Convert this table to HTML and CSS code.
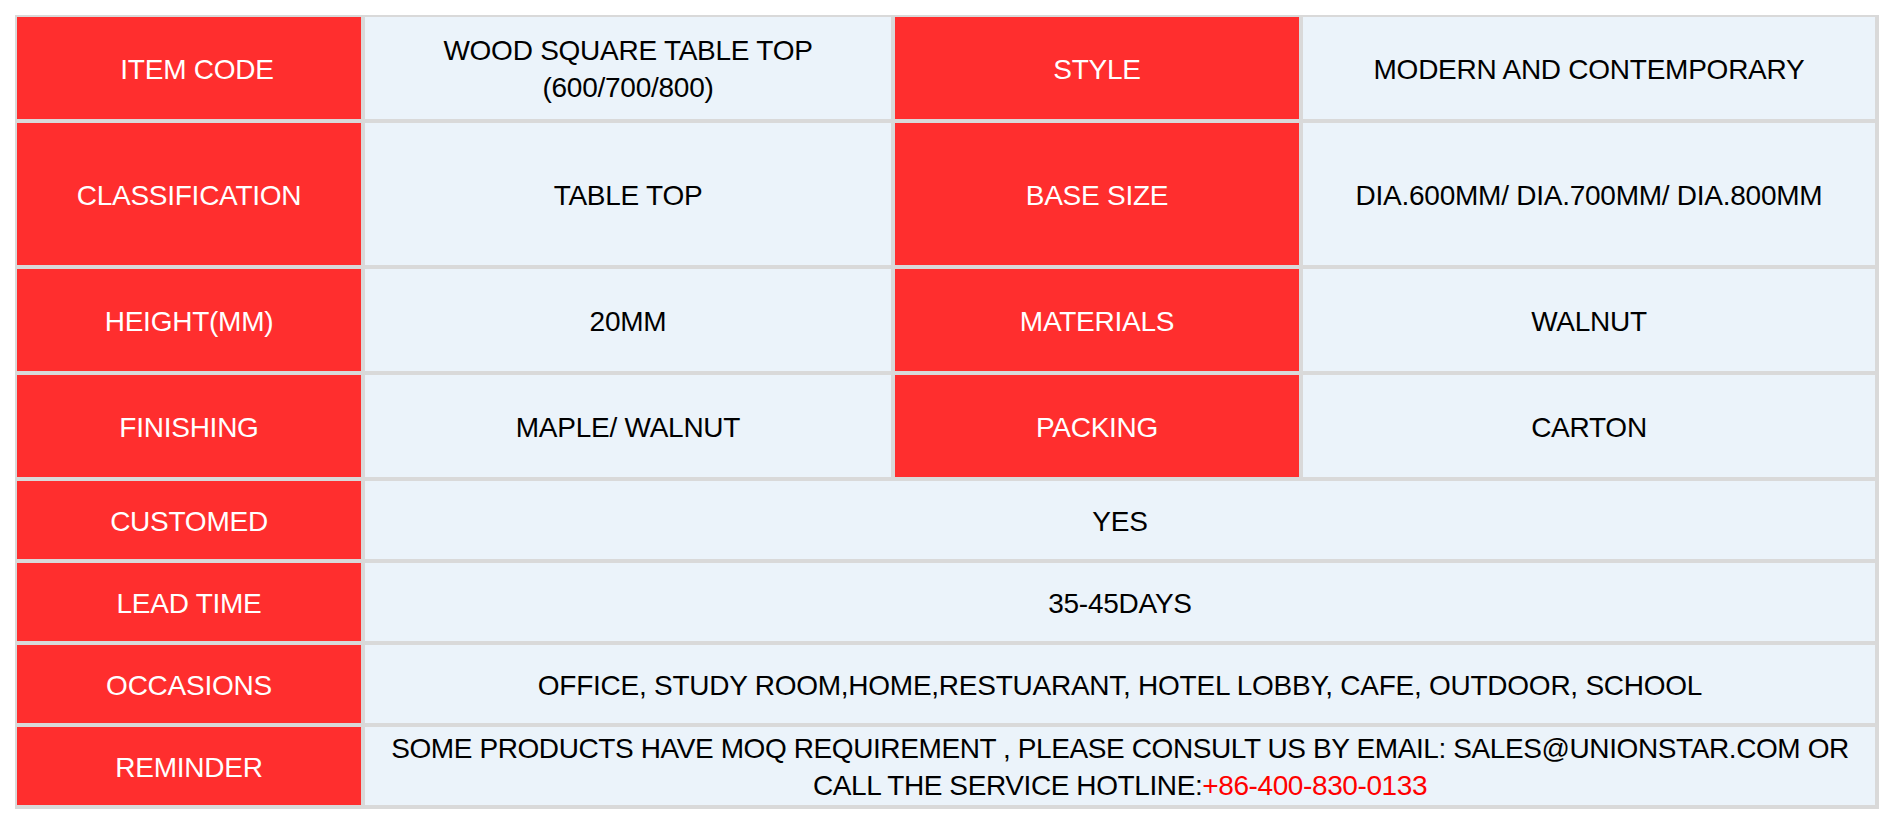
FILE: index.html
```html
<!DOCTYPE html>
<html>
<head>
<meta charset="utf-8">
<link rel="stylesheet" href="styles.css">
</head>
<body>
<div class="spec">
  <div class="cell key key-indent">ITEM CODE</div>
  <div class="cell val">WOOD SQUARE TABLE TOP<br>(600/700/800)</div>
  <div class="cell key">STYLE</div>
  <div class="cell val">MODERN AND CONTEMPORARY</div>

  <div class="cell key">CLASSIFICATION</div>
  <div class="cell val">TABLE TOP</div>
  <div class="cell key">BASE SIZE</div>
  <div class="cell val">DIA.600MM/ DIA.700MM/ DIA.800MM</div>

  <div class="cell key">HEIGHT(MM)</div>
  <div class="cell val">20MM</div>
  <div class="cell key">MATERIALS</div>
  <div class="cell val">WALNUT</div>

  <div class="cell key">FINISHING</div>
  <div class="cell val">MAPLE/ WALNUT</div>
  <div class="cell key">PACKING</div>
  <div class="cell val">CARTON</div>

  <div class="cell key">CUSTOMED</div>
  <div class="cell val wide">YES</div>

  <div class="cell key">LEAD TIME</div>
  <div class="cell val wide">35-45DAYS</div>

  <div class="cell key">OCCASIONS</div>
  <div class="cell val wide">OFFICE, STUDY ROOM,HOME,RESTUARANT, HOTEL LOBBY, CAFE, OUTDOOR, SCHOOL</div>

  <div class="cell key">REMINDER</div>
  <div class="cell val wide"><p class="note">SOME PRODUCTS HAVE MOQ REQUIREMENT , PLEASE CONSULT US BY EMAIL: SALES@UNIONSTAR.COM OR<br>CALL THE SERVICE HOTLINE:<span class="hotline">+86-400-830-0133</span></p></div>
</div>
</body>
</html>
```

FILE: styles.css
```css
html, body {
  margin: 0;
  padding: 0;
  background: #ffffff;
}

body {
  padding: 15px;
  font-family: "Liberation Sans", Arial, sans-serif;
}

.spec {
  display: grid;
  grid-template-columns: 344px 526px 404px 572px;
  grid-template-rows: 102px 142px 102px 102px 78px 78px 78px 78px;
  gap: 4px;
  padding: 2px 4px 4px 2px;
  background: #d9d9d9;
  width: max-content;
}

.cell {
  display: flex;
  align-items: center;
  justify-content: center;
  text-align: center;
  font-size: 28px;
  line-height: 37px;
  letter-spacing: -0.25px;
  padding-top: 2px;
}

.key {
  background: #ff2e2e;
  color: #ffffff;
}

.key-indent {
  padding-left: 16px;
}

.val {
  background: #ebf3fa;
  color: #000000;
}

.wide {
  grid-column: span 3;
}

.note {
  margin: 0;
  white-space: nowrap;
  letter-spacing: -0.4px;
}

.hotline {
  color: #ff0000;
}
```
